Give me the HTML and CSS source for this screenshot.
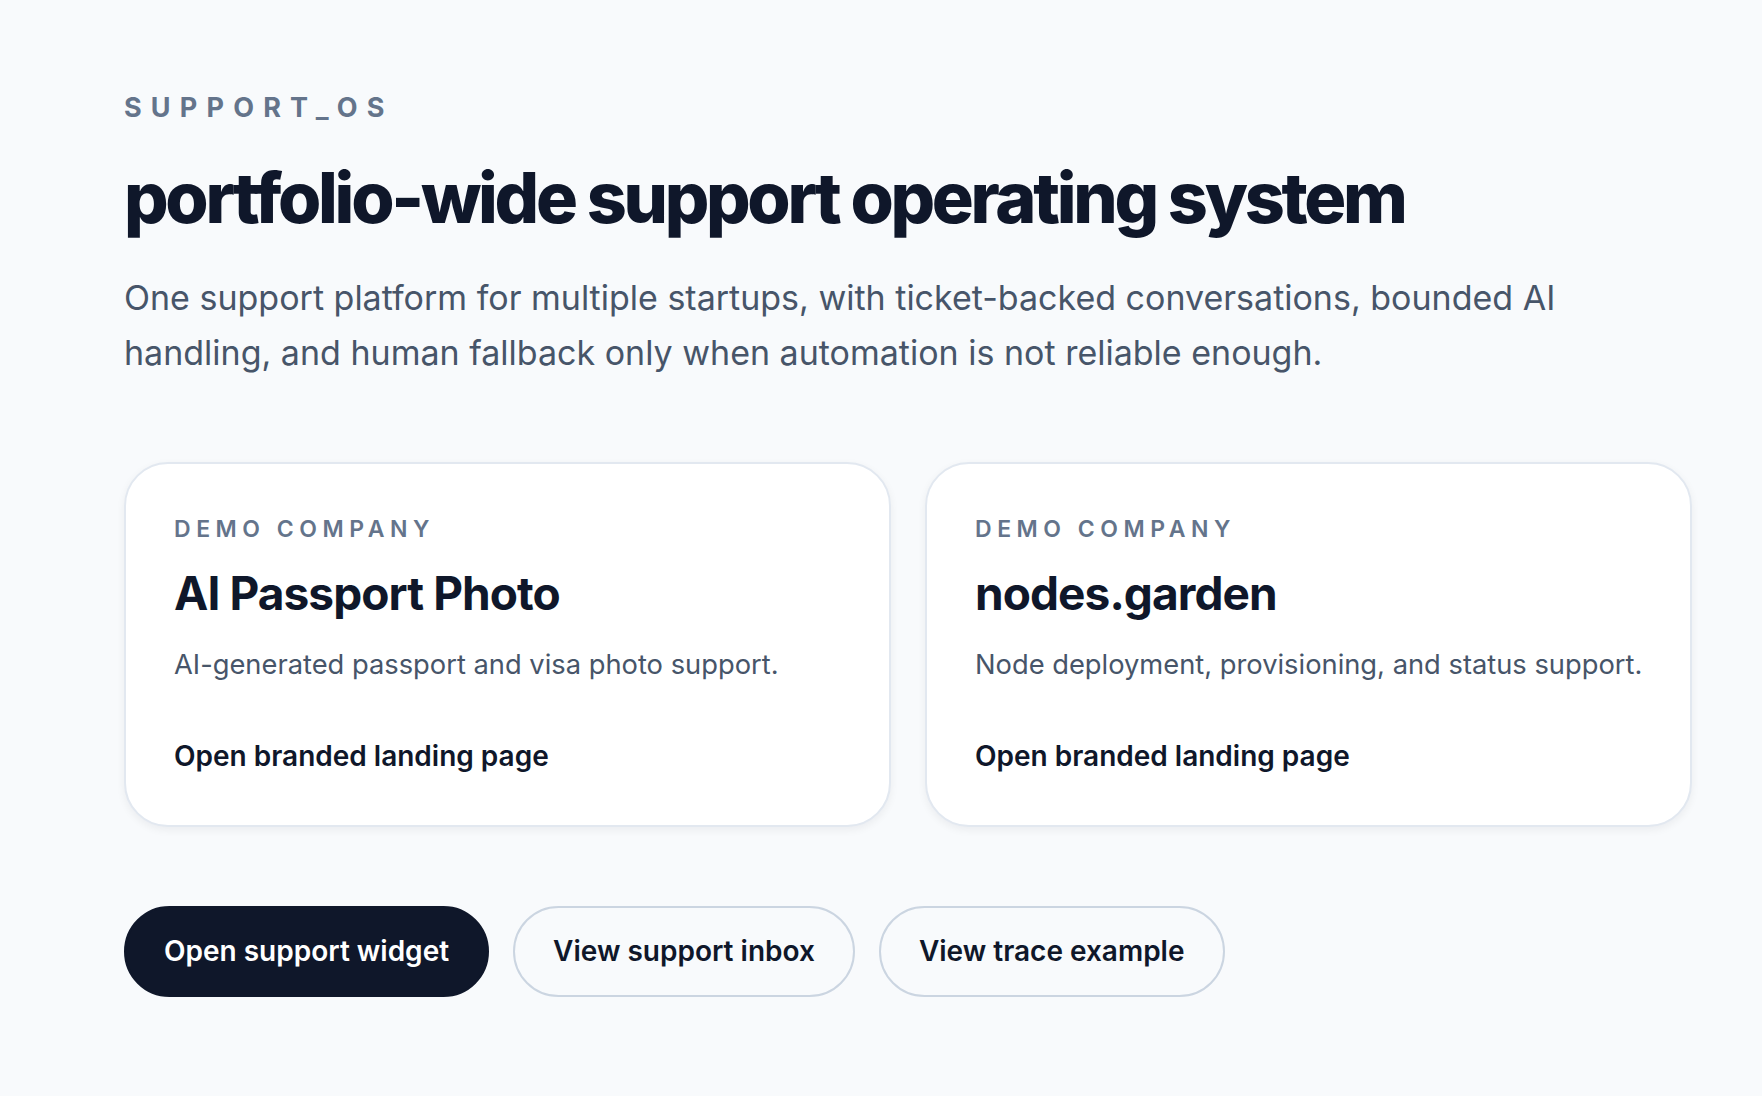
FILE: index.html
```html
<!DOCTYPE html>
<html lang="en">
<head>
<meta charset="utf-8">
<title>support_os</title>
<link rel="stylesheet" href="styles.css">
</head>
<body>
<main class="page">
  <p class="eyebrow">support_os</p>
  <h1 class="title">portfolio-wide support operating system</h1>
  <p class="lead">One support platform for multiple startups, with ticket-backed conversations, bounded AI handling, and human fallback only when automation is not reliable enough.</p>

  <section class="cards">
    <article class="card">
      <p class="card-eyebrow">Demo company</p>
      <h2 class="card-title">AI Passport Photo</h2>
      <p class="card-desc">AI-generated passport and visa photo support.</p>
      <a class="card-link" href="#">Open branded landing page</a>
    </article>
    <article class="card">
      <p class="card-eyebrow">Demo company</p>
      <h2 class="card-title">nodes.garden</h2>
      <p class="card-desc">Node deployment, provisioning, and status support.</p>
      <a class="card-link" href="#">Open branded landing page</a>
    </article>
  </section>

  <nav class="actions">
    <a class="btn btn-primary" href="#">Open support widget</a>
    <a class="btn btn-outline" href="#">View support inbox</a>
    <a class="btn btn-outline" href="#">View trace example</a>
  </nav>
</main>
</body>
</html>
```

FILE: styles.css
```css
* { box-sizing: border-box; }

html, body {
  margin: 0;
  padding: 0;
  background: #f8fafc;
}

body {
  font-family: Inter, "Noto Sans", "Liberation Sans", sans-serif;
  color: #0f172a;
}

.page {
  width: 1568px;
  margin-left: 124px;
  padding-top: 93px;
  padding-bottom: 60px;
}

.eyebrow {
  margin: 0;
  font-size: 27px;
  line-height: 30px;
  font-weight: 700;
  letter-spacing: 0.34em;
  text-transform: uppercase;
  color: #64748b;
}

.title {
  margin: 36px 0 0;
  font-size: 70px;
  line-height: 77px;
  font-weight: 800;
  letter-spacing: -0.047em;
  color: #0f172a;
}

.lead {
  margin: 34px 0 0;
  max-width: 1540px;
  font-size: 34px;
  line-height: 55px;
  font-weight: 400;
  color: #475569;
}

.cards {
  margin-top: 82px;
  display: grid;
  grid-template-columns: 1fr 1fr;
  gap: 34px;
}

.card {
  background: #ffffff;
  border: 2px solid #e2e8f0;
  border-radius: 44px;
  padding: 52px 30px 48px 48px;
  box-shadow: 0 3px 8px rgba(15, 23, 42, 0.06);
}

.card-eyebrow {
  margin: 0;
  font-size: 23px;
  line-height: 27px;
  font-weight: 600;
  letter-spacing: 0.24em;
  text-transform: uppercase;
  color: #64748b;
}

.card-title {
  margin: 23px 0 0;
  font-size: 46px;
  line-height: 55px;
  font-weight: 700;
  letter-spacing: -0.02em;
  color: #0f172a;
}

.card-desc {
  margin: 24px 0 0;
  font-size: 27.3px;
  line-height: 40px;
  white-space: nowrap;
  color: #475569;
}

.card-link {
  display: inline-block;
  margin-top: 50px;
  font-size: 28px;
  line-height: 42px;
  font-weight: 600;
  color: #0f172a;
  text-decoration: none;
}

.actions {
  margin-top: 79px;
  display: flex;
  gap: 24px;
  align-items: center;
}

.btn {
  display: inline-block;
  padding: 27px 38px;
  border-radius: 999px;
  border: 2px solid #cbd5e1;
  font-size: 28px;
  line-height: 33px;
  font-weight: 600;
  text-decoration: none;
  color: #0f172a;
}

.btn-primary {
  background: #0f172a;
  border-color: #0f172a;
  color: #ffffff;
}

.btn-outline {
  background: transparent;
}
```
